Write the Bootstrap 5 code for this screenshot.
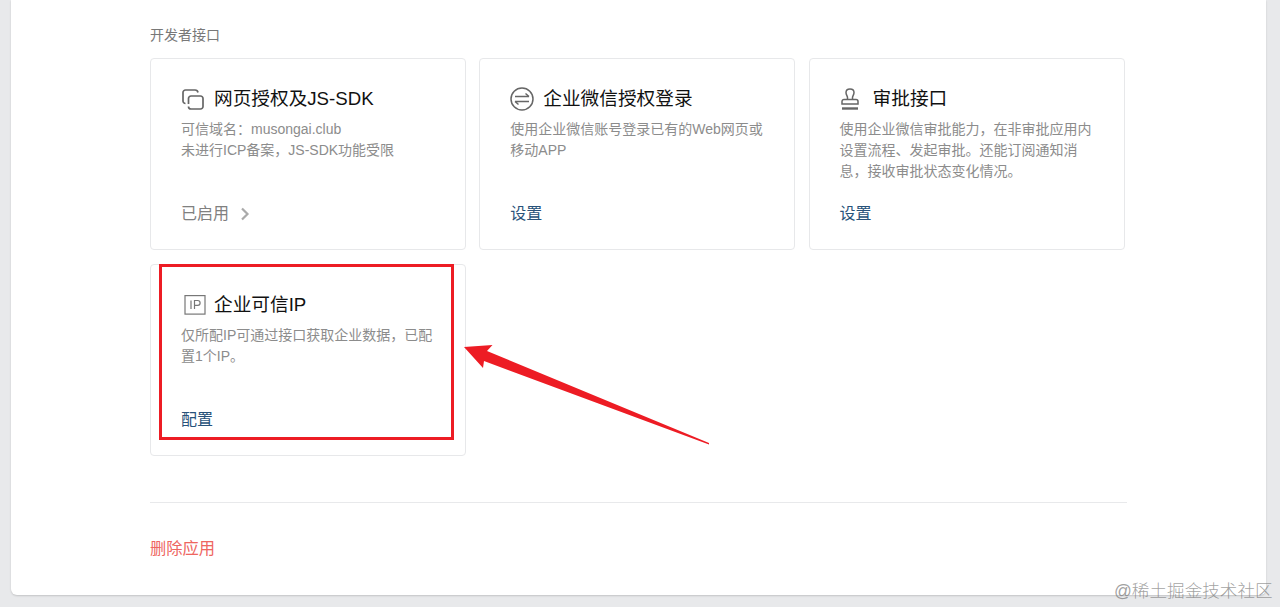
<!DOCTYPE html>
<html lang="zh-CN">
<head>
<meta charset="utf-8">
<title>开发者接口</title>
<link rel="stylesheet" href="https://cdn.jsdelivr.net/npm/bootstrap@5.3.0/dist/css/bootstrap.min.css">
<style>
html,body{height:607px;overflow:hidden}
body{background:#e8e9eb;font-family:"Liberation Sans","Noto Sans CJK SC",sans-serif;position:relative}
.panel-box{background:#fff;height:595px;margin:0 14px 12px 11px;padding:26px 139px 0 139px;border-radius:0 0 6px 6px;box-shadow:0 1px 2px rgba(0,0,0,.16)}
.sect-label{font-size:14px;line-height:18px;color:#787878;margin-bottom:14px}
.api-grid{display:grid;grid-template-columns:repeat(3,316px);column-gap:13.3px;row-gap:14px}
.api-card{height:192px;border:1px solid #e7e8ea;border-radius:4px;padding:27px 30px 23px;--bs-card-bg:#fff}
.api-title{font-size:18.67px;line-height:26px;color:#111;margin-bottom:7px;height:26px}
.ico-slot{width:33px;flex:none}
.ico-nudge{margin-left:1px}
.ico-nudge-lg{margin-left:3px}
.api-desc{font-size:14px;line-height:21px;color:#8c8c8c}
.api-action{font-size:16px;line-height:24px;margin-top:auto;color:#28527a;text-decoration:none}
.api-on{color:#808080}
.chev-gap{margin-left:11px}
.divider-line{border-top:1px solid #e8e9eb;margin-top:46px;opacity:1}
.del-link{display:block;font-size:16.3px;line-height:24px;margin-top:33px;color:#ee6560;text-decoration:none}
.mark-frame{position:absolute;left:159px;top:264px;width:295px;height:176px;border:3px solid #ed1c24;pointer-events:none}
.mark-arrow{position:absolute;left:0;top:0;pointer-events:none}
.watermark{position:absolute;left:1114px;top:579px;font-size:17.6px;line-height:24px;color:rgba(120,120,120,.7);font-weight:300;white-space:nowrap}
</style>
</head>
<body>
<main class="panel-box">
  <div class="sect-label">开发者接口</div>
  <div class="api-grid">
    <section class="card api-card">
      <div class="api-title d-flex align-items-center">
        <span class="ico-slot d-flex"><svg class="ico-nudge" width="22" height="21" viewBox="0 0 22 21" fill="none" stroke="#666" stroke-width="1.700"><path d="M3.500 14.500A2.500 2.500 0 0 1 1 12V3.500A2.500 2.500 0 0 1 3.500 1H13a3 3 0 0 1 3 2.500"/><path d="M6.500 15V9.500A2.500 2.500 0 0 1 9 7h9.500A2.500 2.500 0 0 1 21 9.500v8a2.500 2.500 0 0 1-2.500 2.500H9a2.500 2.500 0 0 1-2.500-2.500"/></svg></span>
        <span>网页授权及JS-SDK</span>
      </div>
      <div class="api-desc">可信域名：musongai.club<br>未进行ICP备案，JS-SDK功能受限</div>
      <a class="api-action api-on d-flex align-items-center" href="#">已启用<svg class="chev-gap" width="10" height="14" viewBox="0 0 10 14" fill="none" stroke="#aaa" stroke-width="2.200"><path d="M2 1.500 7.500 7 2 12.500"/></svg></a>
    </section>
    <section class="card api-card">
      <div class="api-title d-flex align-items-center">
        <span class="ico-slot d-flex"><svg width="24" height="24" viewBox="0 0 24 24" fill="none" stroke="#666" stroke-width="1.500"><circle cx="12" cy="12" r="11"/><path d="M5 9.500h14M15.500 6.500l3.500 3M19 14.500H5M8.500 17.500 5 14.500"/></svg></span>
        <span>企业微信授权登录</span>
      </div>
      <div class="api-desc">使用企业微信账号登录已有的Web网页或<br>移动APP</div>
      <a class="api-action" href="#">设置</a>
    </section>
    <section class="card api-card">
      <div class="api-title d-flex align-items-center">
        <span class="ico-slot d-flex"><svg class="ico-nudge" width="18" height="23" viewBox="0 0 18 23" fill="none" stroke="#666" stroke-width="1.500"><path d="M6.500 11.500V9.500C6.500 8 5 7 5 4.500 5 2.300 6.800 1 9 1s4 1.300 4 3.500C13 7 11.500 8 11.500 9.500v2"/><path d="M1 16v-2.500a2 2 0 0 1 2-2h12a2 2 0 0 1 2 2V16z"/><path d="M1 20.500h16" stroke-width="2.400"/></svg></span>
        <span>审批接口</span>
      </div>
      <div class="api-desc">使用企业微信审批能力，在非审批应用内<br>设置流程、发起审批。还能订阅通知消<br>息，接收审批状态变化情况。</div>
      <a class="api-action" href="#">设置</a>
    </section>
    <section class="card api-card">
      <div class="api-title d-flex align-items-center">
        <span class="ico-slot d-flex"><svg class="ico-nudge-lg" width="22" height="20" viewBox="0 0 22 20" fill="none" stroke="#777" stroke-width="1.200"><rect x="1" y=".6" width="20" height="18.500"/><path d="M7 5.500v8.500M10.500 14V5.500h3.200a2.400 2.400 0 0 1 0 4.800h-3.200"/></svg></span>
        <span>企业可信IP</span>
      </div>
      <div class="api-desc">仅所配IP可通过接口获取企业数据，已配<br>置1个IP。</div>
      <a class="api-action" href="#">配置</a>
    </section>
  </div>
  <hr class="divider-line">
  <a class="del-link" href="#">删除应用</a>
</main>
<div class="mark-frame"></div>
<svg class="mark-arrow" width="1280" height="607" viewBox="0 0 1280 607"><polygon fill="#ed1c24" points="464,347 492.500,345 487,351 709,443 709,444.500 484,361 483,368"/></svg>
<div class="watermark">@稀土掘金技术社区</div>
</body>
</html>
